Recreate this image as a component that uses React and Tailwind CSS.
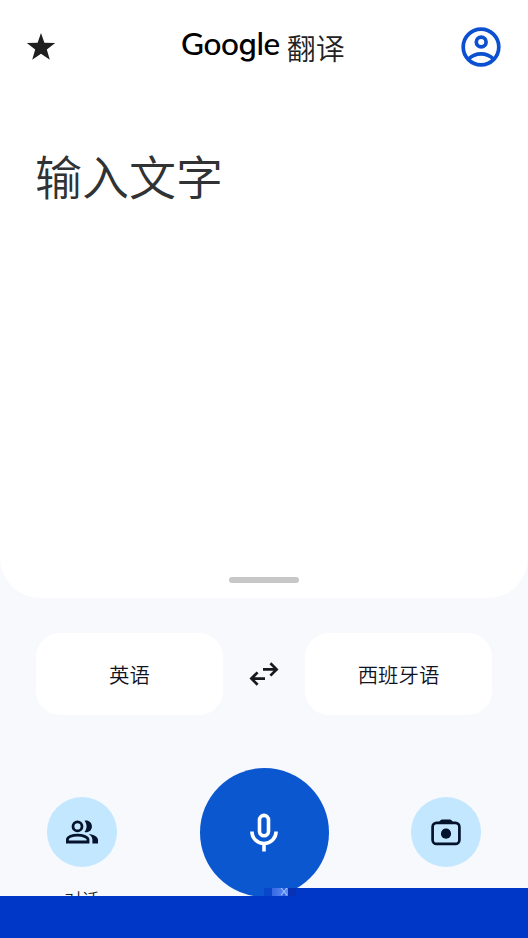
import clsx from 'clsx';

const StarIcon = () => (
  <svg width="30" height="30" viewBox="0 0 30 30" fill="#1f1f1f">
    <path d="M15 1l3.4 9.8 10.8.2-8.4 6.6 3 10.2L15 21.8l-8.8 6 3-10.2L.8 11l10.8-.2z" />
  </svg>
);

const AccountIcon = () => (
  <svg width="40" height="40" viewBox="0 0 40 40" fill="none" stroke="#0b50d0" strokeWidth="3.7">
    <circle cx="20" cy="20" r="17.8" />
    <circle cx="20.2" cy="15" r="4.9" />
    <path d="M7.5 32c7-6.8 18-6.8 25 0" />
  </svg>
);

const SwapIcon = () => (
  <svg width="30" height="24" viewBox="0 0 30 24" fill="none" stroke="#17191d" strokeWidth="2.7">
    <path d="M14 7.4h13M21.4 1.2l6.2 6.2-6.2 6.2" />
    <path d="M16 16.6H3M8.6 10.4l-6.2 6.2 6.2 6.2" />
  </svg>
);

const PeopleIcon = () => (
  <svg width="34" height="26" viewBox="0 0 34 26" fill="none" stroke="#04132b" strokeWidth="2.8">
    <circle cx="12.5" cy="7.4" r="4.5" />
    <path d="M2.400 23v-2.400C2.400 17.700 7.500 16.200 12.500 16.200s10.500 1.500 10.500 4.400V23z" />
    <path
      d="M19.500 1.800c4-1 7.400 1.800 7.400 5.600s-3.400 6.600-7.400 5.600c2.800-3.400 2.800-7.800 0-11.200zM23.800 15c5 .7 9.200 2.800 9.200 5.800v3.600h-5.600v-3.600c0-2.400-1.500-4.300-3.600-5.800z"
      fill="#04132b"
      stroke="none"
    />
  </svg>
);

const MicIcon = () => (
  <svg width="30" height="40" viewBox="0 0 30 40" fill="none" stroke="#fff" strokeWidth="3.6">
    <rect x="10.500" y="2.400" width="9" height="20.300" rx="4.500" />
    <path d="M2.900 18.500a12.100 12.100 0 0 0 24.200 0M15 30.500v8" />
  </svg>
);

const CameraIcon = () => (
  <svg width="32" height="28" viewBox="0 0 32 28" fill="none" stroke="#04132b" strokeWidth="2.700">
    <rect x="2.600" y="4.900" width="26.800" height="21" rx="4" />
    <path d="M8.500 4.500l1.800-2q.8-1 2-1h7.400q1.200 0 2 1l1.800 2z" fill="#04132b" stroke="none" />
    <circle cx="16" cy="15.700" r="5.100" fill="#04132b" stroke="none" />
  </svg>
);

const LanguageButton = ({ children }) => (
  <button
    type="button"
    className="flex h-[82px] w-[187px] items-center justify-center rounded-[24px] bg-white pt-px text-[20.4px] font-[350] text-[#101322]"
  >
    {children}
  </button>
);

const RoundAction = ({ label, className, children }) => (
  <div className={clsx('flex w-[70px] flex-col items-center', className)}>
    <button
      type="button"
      className="flex size-[70px] shrink-0 items-center justify-center rounded-full bg-[#c2e7ff]"
    >
      {children}
    </button>
    <span className="mt-[20px] text-[17.5px] leading-6 font-[350] whitespace-nowrap text-[#1f1f1f]">
      {label}
    </span>
  </div>
);

const Header = () => (
  <header className="flex h-[94px] items-center justify-between pr-[27px] pl-[26px]">
    <button type="button">
      <StarIcon />
    </button>
    <h1 className="flex items-baseline pl-[9px] text-black">
      <span className="relative -top-1 mr-[7px] flex items-baseline font-['Lato'] text-[31.5px] leading-10 font-medium tracking-[-0.4px]">
        <span>Goo</span>
        <span className="font-['Inter'] text-[29.5px] font-[450]">g</span>
        <span>le</span>
      </span>
      <span className="relative top-px text-[29px] leading-10 font-[350] text-[#222]">翻译</span>
    </h1>
    <button type="button">
      <AccountIcon />
    </button>
  </header>
);

const BottomBar = () => (
  <div className="absolute inset-x-0 bottom-0 flex h-[50px] flex-col">
    <div className="flex h-2 justify-end">
      <div className="w-2 bg-[#0847cb]" />
      <div className="flex w-4 bg-gradient-to-r from-[#3768e4] to-[#5f8df2]">
        <svg width="16" height="8" viewBox="0 0 16 8" fill="none" stroke="#a9c6ff">
          <path d="M9 0l6 7M15 0L9 7" />
          <path d="M11 1h2M11 7h2" stroke="#1746ca" />
        </svg>
      </div>
      <div className="w-2 bg-[#0732b3]" />
      <div className="w-[232px] bg-[#0037c6]" />
    </div>
    <div className="h-[42px] bg-[#0037c6]" />
  </div>
);

const App = () => (
  <div
    lang="zh-CN"
    className="relative h-[938px] w-[528px] overflow-hidden bg-[#f7f9fd] font-['Noto_Sans_CJK_SC',sans-serif]"
  >
    <section className="flex h-[598px] flex-col rounded-b-[40px] bg-white">
      <Header />
      <p className="mt-[46px] pl-[35px] text-[47px] leading-[70px] font-[350] text-[#303233]">
        输入文字
      </p>
      <div className="mx-auto mt-auto mb-[15px] h-[6px] w-[70px] rounded-full bg-[#c7c7c7]" />
    </section>

    <div className="mt-[35px] flex items-center justify-between px-[36px]">
      <LanguageButton>英语</LanguageButton>
      <button type="button">
        <SwapIcon />
      </button>
      <LanguageButton>西班牙语</LanguageButton>
    </div>

    <div className="mt-[53px] flex items-start justify-between px-[47px]">
      <RoundAction label="对话" className="mt-[29px]">
        <PeopleIcon />
      </RoundAction>
      <button
        type="button"
        className="flex size-[129px] items-center justify-center rounded-full bg-[#0b57d0]"
      >
        <MicIcon />
      </button>
      <RoundAction label="相机" className="mt-[29px]">
        <CameraIcon />
      </RoundAction>
    </div>

    <BottomBar />
  </div>
);

export default App;
